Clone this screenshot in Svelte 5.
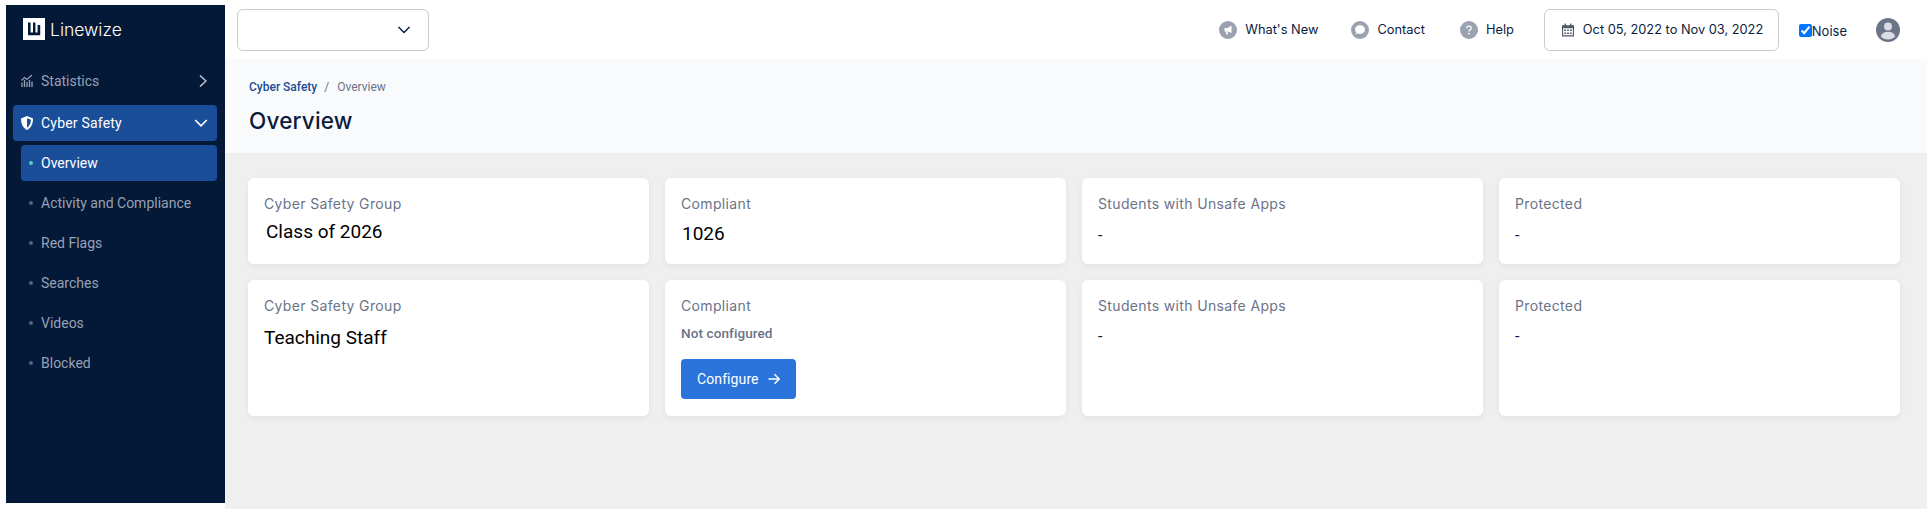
<script>
  const subItems = ['Activity and Compliance', 'Red Flags', 'Searches', 'Videos', 'Blocked'];
  const rows = [
    { group: 'Class of 2026', groupClass: 'indent', compliant: '1026', dashClass: 'd1' },
    { group: 'Teaching Staff', groupClass: 'low', compliant: null, dashClass: 'd2' }
  ];
</script>

<div class="shell">
  <aside class="sidebar">
    <div class="brand">
      <svg class="logo" viewBox="0 0 22 22" aria-hidden="true">
        <rect width="22" height="22" fill="#fff" />
        <path d="M5 4.500h2.600v10H10V4.500h2.400v10h2.200V7h2.600v10.300H5z" fill="#041838" />
      </svg>
      <span>Linewize</span>
    </div>
    <nav class="nav">
      <div class="item">
        <svg class="ic" viewBox="0 0 12 14" aria-hidden="true">
          <path d="M.5 6.500 3.500 3.500 6 5.500 11 1" fill="none" stroke="currentColor" stroke-width="1.200" />
          <path d="M1 8.500V13M3.500 6v7M6 8v5M8.500 6v7M11 7.500V13" stroke="currentColor" stroke-width="1.300" />
        </svg>
        <span class="grow">Statistics</span>
        <svg class="chev" viewBox="0 0 8 12" aria-hidden="true"><path d="M1 .5 7 6l-6 5.500" fill="none" stroke="currentColor" stroke-width="1.500" /></svg>
      </div>
      <div class="item active">
        <svg class="ic" viewBox="0 0 12 14" aria-hidden="true">
          <path d="M6 0 12 2.400C12 7.800 10 11.800 6 14 2 11.800 0 7.800 0 2.400z" fill="#fff" />
          <path d="M6 2.200 10 3.800C9.800 7.200 8.600 10 6 11.700z" fill="#1a4e99" />
        </svg>
        <span class="grow">Cyber Safety</span>
        <svg class="chev down" viewBox="0 0 14 8" aria-hidden="true"><path d="M1.200 1 7 6.800 12.800 1" fill="none" stroke="currentColor" stroke-width="1.700" /></svg>
      </div>
      <div class="sub current"><i class="dot"></i>Overview</div>
      {#each subItems as s}
        <div class="sub"><i class="dot"></i>{s}</div>
      {/each}
    </nav>
  </aside>

  <main class="main">
    <header class="top">
      <button class="select" aria-label="Select">
        <svg viewBox="0 0 14 8" aria-hidden="true"><path d="M1.500 1 7 6.500 12.500 1" fill="none" stroke="#0c1c3f" stroke-width="1.500" /></svg>
      </button>
      <div class="actions">
        <span class="act">
          <svg class="round" viewBox="0 0 18 18" aria-hidden="true">
            <circle cx="9" cy="9" r="9" fill="#9aa1b0" />
            <path d="M12.500 4.500v7.500L8.500 10.500H5.500V7h3z" fill="#fff" />
            <path d="M6.500 10.500 7.500 13.500H9L8.300 10.500z" fill="#fff" />
          </svg>
          What's New
        </span>
        <span class="act">
          <svg class="round" viewBox="0 0 18 18" aria-hidden="true">
            <circle cx="9" cy="9" r="9" fill="#9aa1b0" />
            <path d="M9 4.300c2.900 0 5 1.900 5 4.300s-2.100 4.300-5 4.300c-.7 0-1.400-.1-2-.4L4.700 13.500l.7-2.100C4.500 10.500 4 9.600 4 8.600c0-2.400 2.100-4.300 5-4.300z" fill="#fff" />
          </svg>
          Contact
        </span>
        <span class="act">
          <svg class="round" viewBox="0 0 18 18" aria-hidden="true">
            <circle cx="9" cy="9" r="9" fill="#9aa1b0" />
            <path d="M6.700 7.200C6.800 5.900 7.800 5.200 9 5.200c1.300 0 2.300.8 2.300 1.900 0 1.800-2.300 1.700-2.300 3.500" fill="none" stroke="#fff" stroke-width="1.300" />
            <circle cx="9" cy="12.700" r=".9" fill="#fff" />
          </svg>
          Help
        </span>
        <div class="date">
          <svg viewBox="0 0 14 15" aria-hidden="true">
            <path fill="#4e566a" d="M3 0h1.600v2H9.400V0H11v2h3v13H0V2h3zM1.300 5.500v8.200h11.400V5.500z" />
            <path fill="#4e566a" d="M2.500 6.800h2v1.800h-2zM6 6.800h2v1.800H6zM9.500 6.800h2v1.800h-2zM2.500 10.300h2v1.800h-2zM6 10.300h2v1.800H6zM9.500 10.300h2v1.800h-2z" />
          </svg>
          Oct 05, 2022 to Nov 03, 2022
        </div>
        <label class="noise"><input type="checkbox" checked />Noise</label>
        <svg class="avatar" viewBox="0 0 24 24" aria-hidden="true">
          <circle cx="12" cy="12" r="12" fill="#6d7488" />
          <circle cx="12" cy="8.500" r="4" fill="#d9dce3" />
          <path d="M4.800 18.500c.6-3 3.200-4.700 7.200-4.700s6.600 1.700 7.200 4.700c-1.800 2-4.300 3-7.200 3s-5.400-1-7.200-3z" fill="#d9dce3" />
        </svg>
      </div>
    </header>

    <section class="pagehead">
      <div class="crumbs"><b>Cyber Safety</b><span class="sep">/</span><span>Overview</span></div>
      <h1>Overview</h1>
    </section>

    <section class="grid">
      {#each rows as r}
        <div class="card">
          <div class="label">Cyber Safety Group</div>
          <div class="big {r.groupClass}">{r.group}</div>
        </div>
        <div class="card">
          <div class="label">Compliant</div>
          {#if r.compliant}
            <div class="big num">{r.compliant}</div>
          {:else}
            <div class="nc">Not configured</div>
            <button class="cfg">Configure
              <svg viewBox="0 0 12 12" aria-hidden="true"><path d="M.5 6h10.500M6.500 1.200 11.200 6l-4.700 4.800" fill="none" stroke="#fff" stroke-width="1.400" /></svg>
            </button>
          {/if}
        </div>
        <div class="card">
          <div class="label">Students with Unsafe Apps</div>
          <div class="dash {r.dashClass}">-</div>
        </div>
        <div class="card">
          <div class="label">Protected</div>
          <div class="dash {r.dashClass}">-</div>
        </div>
      {/each}
    </section>
  </main>
</div>

<style>
  :global(body) { margin: 0; background: #fff; }
  .shell { display: flex; height: 509px; overflow: hidden; font-family: Roboto, sans-serif; }

  .sidebar { width: 219px; margin: 5px 0 6px 6px; background: #041838; flex: none; }
  .brand { display: flex; align-items: center; gap: 5px; height: 22px; padding: 13px 0 0 17px; color: #fff; font-size: 17.500px; font-weight: 300; font-family: Inter, sans-serif; }
  .logo { width: 22px; height: 22px; flex: none; }
  .nav { display: flex; flex-direction: column; padding: 23px 8px 0 7px; }
  .item { display: flex; align-items: center; height: 36px; border-radius: 4px; padding: 0 9px 0 8px; color: #98a1b3; font-size: 14px; margin-bottom: 6px; }
  .item.active { background: #1a4e99; color: #fff; margin-bottom: 4px; letter-spacing: .2px; }
  .ic { width: 12px; height: 14px; margin-right: 8px; flex: none; }
  .grow { flex: 1; }
  .chev { width: 8px; height: 12px; margin-right: 1px; color: #c3c8d2; }
  .chev.down { width: 14px; height: 8px; margin-right: 0; color: #fff; }
  .sub { display: flex; align-items: center; height: 36px; margin: 0 0 4px 8px; padding-left: 8px; border-radius: 4px; font-size: 14px; color: #98a1b3; }
  .sub.current { background: #1a4e99; color: #fff; }
  .dot { width: 4px; height: 4px; border-radius: 50%; background: #55627c; margin-right: 8px; flex: none; }
  .current .dot { background: #4fd1c5; }

  .main { flex: 1; min-width: 0; background: #efefef; display: flex; flex-direction: column; }
  .top { height: 59px; background: #fff; display: flex; align-items: center; justify-content: space-between; padding: 0 27px 0 12px; font-family: Inter, sans-serif; flex: none; }
  .select { width: 192px; height: 42px; background: #fff; border: 1px solid #c5cad5; border-radius: 6px; display: flex; align-items: center; justify-content: flex-end; padding: 0 17px 0 0; margin: 0; }
  .select svg { width: 14px; height: 8px; }
  .actions { display: flex; align-items: center; color: #0c1c3f; font-size: 12.800px; }
  .act { display: flex; align-items: center; gap: 8px; margin-right: 35px; }
  .act:nth-child(1) { margin-right: 33px; }
  .act:nth-child(3) { margin-right: 30px; }
  .round { width: 18px; height: 18px; flex: none; }
  .date { width: 235px; height: 42px; box-sizing: border-box; border: 1px solid #c5cad5; border-radius: 6px; display: flex; align-items: center; gap: 9px; padding-left: 17px; white-space: nowrap; }
  .date svg { width: 12px; height: 14px; flex: none; }
  .noise { display: flex; align-items: center; margin: 2px 29px 0 20px; color: #0c1c3f; font-size: 13px; }
  .noise input { width: 13px; height: 13px; margin: 0; }
  .avatar { width: 24px; height: 24px; flex: none; }

  .pagehead { height: 94px; background: #f9fafb; box-sizing: border-box; padding: 20px 0 0 24px; flex: none; }
  .crumbs { font-size: 12px; line-height: 16px; color: #6a7389; display: flex; }
  .crumbs b { color: #1a4e99; font-weight: 500; }
  .sep { margin: 0 8px 0 7px; }
  h1 { margin: 11px 0 0; font: 500 22.500px/30px Inter, sans-serif; color: #0c1c3f; letter-spacing: .2px; }

  .grid { display: grid; grid-template-columns: repeat(4, 1fr); grid-template-rows: 86px 136px; gap: 16px; padding: 25px 27px 0 23px; }
  .card { background: #fff; border-radius: 6px; box-shadow: 0 2px 6px rgba(0, 0, 0, .06); padding: 16px; min-width: 0; }
  .label { font: 400 14px/20px Inter, sans-serif; color: #6a7389; letter-spacing: .35px; }
  .big { font-size: 19px; line-height: 24px; color: #000; margin-top: 6px; }
  .indent { margin-left: 2px; margin-top: 6px; }
  .low { margin-top: 10px; }
  .num { margin-left: 1px; margin-top: 8px; }
  .dash { font-size: 16px; line-height: 20px; color: #0c1c3f; margin-top: 12px; }
  .dash.d2 { margin-top: 11px; }
  .nc { font-size: 13.500px; font-weight: 500; letter-spacing: .1px; line-height: 18px; color: #6a7389; margin-top: 8px; }
  .cfg { display: flex; align-items: center; gap: 9px; height: 40px; margin-top: 17px; padding: 0 16px; width: 115px; background: #2a74dc; color: #fff; border: 0; border-radius: 4px; font: 400 14px Roboto, sans-serif; letter-spacing: .1px; }
  .cfg svg { width: 12px; height: 12px; }
</style>
